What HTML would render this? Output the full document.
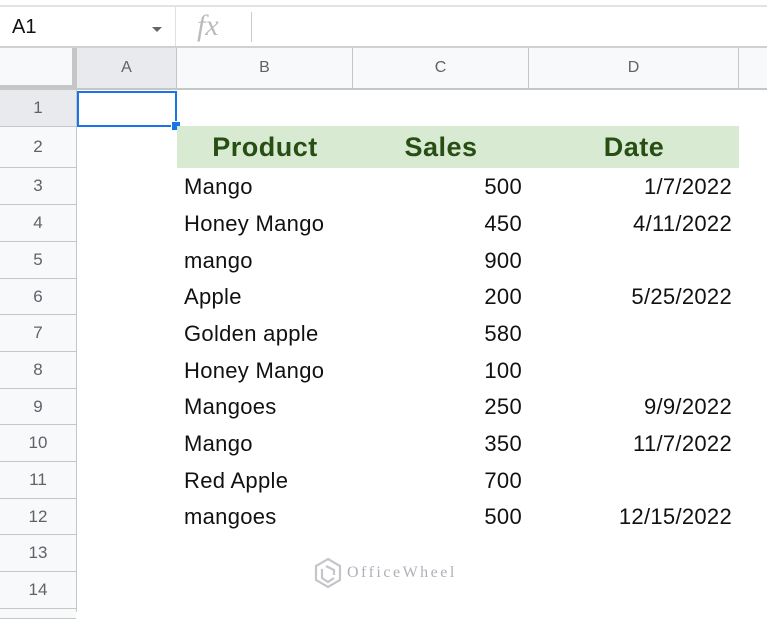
<!DOCTYPE html><html><head><style>
body{margin:0;width:767px;height:612px;overflow:hidden;background:#fff;font-family:"Liberation Sans",Arial,sans-serif;position:relative}
div{position:absolute;box-sizing:border-box}
.rh{left:0;width:76px;background:#f8f9fa;border-bottom:1px solid #c4c7c5;color:#5f6368;font-size:17px;text-align:center}
.ch{top:48px;height:42px;background:#f8f9fa;border-right:1px solid #c4c7c5;border-bottom:2px solid #c4c7c5;color:#5f6368;font-size:16px;text-align:center;line-height:40px}
.t{font-size:22px;letter-spacing:0.3px;color:#111;height:30px;line-height:30px}
.l{left:184px}
.n{right:245px;text-align:right}
.d{right:35px;text-align:right}
.h{top:127px;font-size:27px;letter-spacing:0.5px;font-weight:bold;color:#274e13;line-height:40px}
</style></head><body>
<div style="left:0;top:5px;width:767px;height:2px;background:#e3e3e3"></div>
<div style="left:12px;top:16px;font-size:20px;color:#111">A1</div>
<div style="left:152px;top:27px;width:0;height:0;border-left:5px solid transparent;border-right:5px solid transparent;border-top:5px solid #666"></div>
<div style="left:175px;top:7px;width:1px;height:40px;background:#e0e0e0"></div>
<div style="left:197px;top:9px;font-family:'Liberation Serif',serif;font-style:italic;font-size:30px;color:#bbb">fx</div>
<div style="left:251px;top:12px;width:1px;height:30px;background:#ccc"></div>
<div style="left:0;top:46px;width:767px;height:2px;background:#d0d0d0"></div>
<div style="left:0;top:48px;width:77px;height:42px;background:#f8f9fa;border-right:5px solid #c4c7c5;border-bottom:5px solid #c4c7c5"></div>
<div class="ch" style="left:77px;width:100px;background:#e8eaed">A</div>
<div class="ch" style="left:177px;width:176px">B</div>
<div class="ch" style="left:353px;width:176px">C</div>
<div class="ch" style="left:529px;width:210px">D</div>
<div class="ch" style="left:739px;width:40px"></div>
<div style="left:75px;top:90px;width:2px;height:522px;background:#c4c7c5"></div>
<div class="rh" style="top:90px;height:37px;line-height:36px;background:#e8eaed">1</div>
<div class="rh" style="top:127px;height:41px;line-height:40px">2</div>
<div class="rh" style="top:168px;height:37px;line-height:36px">3</div>
<div class="rh" style="top:205px;height:37px;line-height:36px">4</div>
<div class="rh" style="top:242px;height:37px;line-height:36px">5</div>
<div class="rh" style="top:279px;height:36px;line-height:35px">6</div>
<div class="rh" style="top:315px;height:37px;line-height:36px">7</div>
<div class="rh" style="top:352px;height:37px;line-height:36px">8</div>
<div class="rh" style="top:389px;height:36px;line-height:35px">9</div>
<div class="rh" style="top:425px;height:37px;line-height:36px">10</div>
<div class="rh" style="top:462px;height:37px;line-height:36px">11</div>
<div class="rh" style="top:499px;height:36px;line-height:35px">12</div>
<div class="rh" style="top:535px;height:37px;line-height:36px">13</div>
<div class="rh" style="top:572px;height:37px;line-height:36px">14</div>
<div class="rh" style="top:609px;height:10px"></div>
<div style="left:77px;top:91px;width:100px;height:36px;border:2px solid #1a73e8"></div>
<div style="left:171px;top:121px;width:10px;height:10px;background:#1a73e8;border:1px solid #fff"></div>
<div style="left:177px;top:126px;width:562px;height:42px;background:#d9ead3"></div>
<div class="h" style="left:177px;width:176px;text-align:center">Product</div>
<div class="h" style="left:353px;width:176px;text-align:center">Sales</div>
<div class="h" style="left:529px;width:210px;text-align:center">Date</div>
<div class="t l" style="top:172px">Mango</div><div class="t n" style="top:172px">500</div><div class="t d" style="top:172px">1/7/2022</div>
<div class="t l" style="top:209px">Honey Mango</div><div class="t n" style="top:209px">450</div><div class="t d" style="top:209px">4/11/2022</div>
<div class="t l" style="top:246px">mango</div><div class="t n" style="top:246px">900</div>
<div class="t l" style="top:282px">Apple</div><div class="t n" style="top:282px">200</div><div class="t d" style="top:282px">5/25/2022</div>
<div class="t l" style="top:319px">Golden apple</div><div class="t n" style="top:319px">580</div>
<div class="t l" style="top:356px">Honey Mango</div><div class="t n" style="top:356px">100</div>
<div class="t l" style="top:392px">Mangoes</div><div class="t n" style="top:392px">250</div><div class="t d" style="top:392px">9/9/2022</div>
<div class="t l" style="top:429px">Mango</div><div class="t n" style="top:429px">350</div><div class="t d" style="top:429px">11/7/2022</div>
<div class="t l" style="top:466px">Red Apple</div><div class="t n" style="top:466px">700</div>
<div class="t l" style="top:502px">mangoes</div><div class="t n" style="top:502px">500</div><div class="t d" style="top:502px">12/15/2022</div>
<svg style="position:absolute;left:312px;top:557px" width="32" height="32" viewBox="0 0 32 32"><path d="M16 2 L28 9 L28 23 L16 30 L4 23 L4 9 Z M10 12 L10 21 L16 25 L22 21 M14 9 L22 13 L22 18" fill="none" stroke="#c4c6cc" stroke-width="2.2"/></svg>
<div style="left:347px;top:564px;font-family:'Liberation Serif',serif;font-size:16px;letter-spacing:2.5px;color:#aeb1b8">OfficeWheel</div>
</body></html>
